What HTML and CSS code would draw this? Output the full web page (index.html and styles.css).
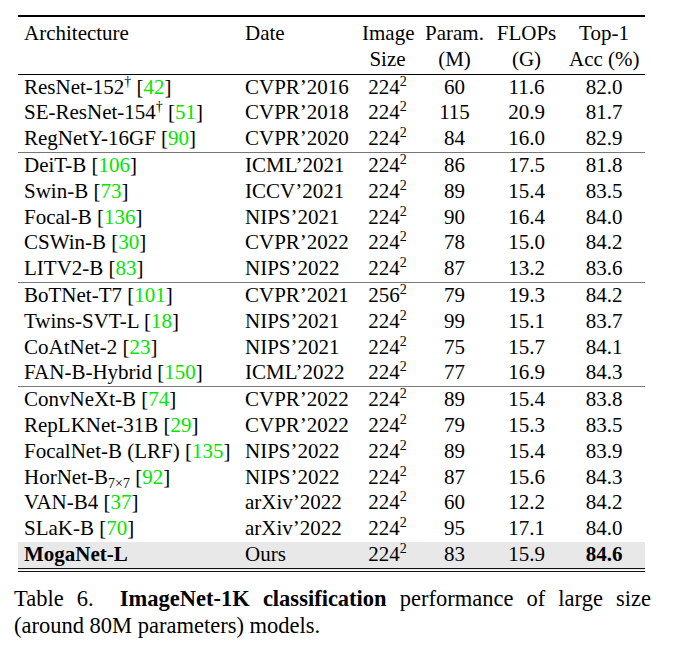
FILE: index.html
```html
<!DOCTYPE html>
<html lang="en">
<head>
<meta charset="utf-8">
<title>Table 6</title>
<link rel="stylesheet" href="styles.css">
</head>
<body>
<div class="figure">
  <table class="results">
    <colgroup>
      <col class="c-arch"><col class="c-date"><col class="c-img"><col class="c-param"><col class="c-flops"><col class="c-acc">
    </colgroup>
    <thead>
      <tr>
        <th class="left">Architecture</th>
        <th class="left">Date</th>
        <th>Image<br>Size</th>
        <th>Param.<br>(M)</th>
        <th>FLOPs<br>(G)</th>
        <th>Top-1<br>Acc (%)</th>
      </tr>
    </thead>
    <tbody>
      <tr><td class="left">ResNet-152<sup>†</sup> [<span class="cite">42</span>]</td><td class="left">CVPR’2016</td><td>224<sup>2</sup></td><td>60</td><td>11.6</td><td>82.0</td></tr>
      <tr><td class="left">SE-ResNet-154<sup>†</sup> [<span class="cite">51</span>]</td><td class="left">CVPR’2018</td><td>224<sup>2</sup></td><td>115</td><td>20.9</td><td>81.7</td></tr>
      <tr><td class="left">RegNetY-16GF [<span class="cite">90</span>]</td><td class="left">CVPR’2020</td><td>224<sup>2</sup></td><td>84</td><td>16.0</td><td>82.9</td></tr>
    </tbody>
    <tbody class="group">
      <tr><td class="left">DeiT-B [<span class="cite">106</span>]</td><td class="left">ICML’2021</td><td>224<sup>2</sup></td><td>86</td><td>17.5</td><td>81.8</td></tr>
      <tr><td class="left">Swin-B [<span class="cite">73</span>]</td><td class="left">ICCV’2021</td><td>224<sup>2</sup></td><td>89</td><td>15.4</td><td>83.5</td></tr>
      <tr><td class="left">Focal-B [<span class="cite">136</span>]</td><td class="left">NIPS’2021</td><td>224<sup>2</sup></td><td>90</td><td>16.4</td><td>84.0</td></tr>
      <tr><td class="left">CSWin-B [<span class="cite">30</span>]</td><td class="left">CVPR’2022</td><td>224<sup>2</sup></td><td>78</td><td>15.0</td><td>84.2</td></tr>
      <tr><td class="left">LITV2-B [<span class="cite">83</span>]</td><td class="left">NIPS’2022</td><td>224<sup>2</sup></td><td>87</td><td>13.2</td><td>83.6</td></tr>
    </tbody>
    <tbody class="group">
      <tr><td class="left">BoTNet-T7 [<span class="cite">101</span>]</td><td class="left">CVPR’2021</td><td>256<sup>2</sup></td><td>79</td><td>19.3</td><td>84.2</td></tr>
      <tr><td class="left">Twins-SVT-L [<span class="cite">18</span>]</td><td class="left">NIPS’2021</td><td>224<sup>2</sup></td><td>99</td><td>15.1</td><td>83.7</td></tr>
      <tr><td class="left">CoAtNet-2 [<span class="cite">23</span>]</td><td class="left">NIPS’2021</td><td>224<sup>2</sup></td><td>75</td><td>15.7</td><td>84.1</td></tr>
      <tr><td class="left">FAN-B-Hybrid [<span class="cite">150</span>]</td><td class="left">ICML’2022</td><td>224<sup>2</sup></td><td>77</td><td>16.9</td><td>84.3</td></tr>
    </tbody>
    <tbody class="group">
      <tr><td class="left">ConvNeXt-B [<span class="cite">74</span>]</td><td class="left">CVPR’2022</td><td>224<sup>2</sup></td><td>89</td><td>15.4</td><td>83.8</td></tr>
      <tr><td class="left">RepLKNet-31B [<span class="cite">29</span>]</td><td class="left">CVPR’2022</td><td>224<sup>2</sup></td><td>79</td><td>15.3</td><td>83.5</td></tr>
      <tr><td class="left">FocalNet-B (LRF) [<span class="cite">135</span>]</td><td class="left">NIPS’2022</td><td>224<sup>2</sup></td><td>89</td><td>15.4</td><td>83.9</td></tr>
      <tr><td class="left">HorNet-B<sub>7×7</sub> [<span class="cite">92</span>]</td><td class="left">NIPS’2022</td><td>224<sup>2</sup></td><td>87</td><td>15.6</td><td>84.3</td></tr>
      <tr><td class="left">VAN-B4 [<span class="cite">37</span>]</td><td class="left">arXiv’2022</td><td>224<sup>2</sup></td><td>60</td><td>12.2</td><td>84.2</td></tr>
      <tr><td class="left">SLaK-B [<span class="cite">70</span>]</td><td class="left">arXiv’2022</td><td>224<sup>2</sup></td><td>95</td><td>17.1</td><td>84.0</td></tr>
      <tr class="ours"><td class="left"><b>MogaNet-L</b></td><td class="left">Ours</td><td>224<sup>2</sup></td><td>83</td><td>15.9</td><td><b>84.6</b></td></tr>
    </tbody>
  </table>
  <p class="caption">
    <span class="cap-line">Table 6.&nbsp; <b>ImageNet-1K classification</b> performance of large size</span>
    <span class="cap-line last">(around 80M parameters) models.</span>
  </p>
</div>
</body>
</html>
```

FILE: styles.css
```css
html, body {
  margin: 0;
  padding: 0;
  background: #fff;
}

body {
  font-family: "Liberation Serif", "Times New Roman", serif;
  color: #000;
  font-size: 21px;
}

.figure {
  padding: 15px 0 0 14px;
  width: 637px;
}

.results {
  margin-left: 4px;
  width: 627px;
  table-layout: fixed;
  border-collapse: collapse;
  border-top: 2px solid #000;
  border-bottom: 4px double #111;
}

.c-arch { width: 221px; }
.c-date { width: 117px; }
.c-img { width: 63px; }
.c-param { width: 71px; }
.c-flops { width: 73px; }
.c-acc { width: 82px; }

.results th,
.results td {
  padding: 0 6px;
  text-align: center;
  white-space: nowrap;
  line-height: 25.8px;
  font-weight: normal;
}

.results th {
  vertical-align: top;
  padding-top: 4px;
  padding-bottom: 1px;
}

.results thead {
  border-bottom: 1px solid #000;
}

.results .left {
  text-align: left;
}

.results tbody.group {
  border-top: 1px solid #777;
}

.results sup {
  font-size: 14px;
  line-height: 0;
  vertical-align: 8px;
}

.results sub {
  font-size: 14px;
  line-height: 0;
  vertical-align: -4px;
}

.cite {
  color: #00e600;
}

.ours td {
  background: #e8e8e8;
}

.caption {
  margin: 13px 0 0;
  width: 637px;
  font-size: 22.5px;
  line-height: 27.5px;
}

.cap-line {
  display: block;
  text-align: justify;
  text-align-last: justify;
  white-space: nowrap;
}

.cap-line.last {
  text-align: left;
  text-align-last: left;
}
```
